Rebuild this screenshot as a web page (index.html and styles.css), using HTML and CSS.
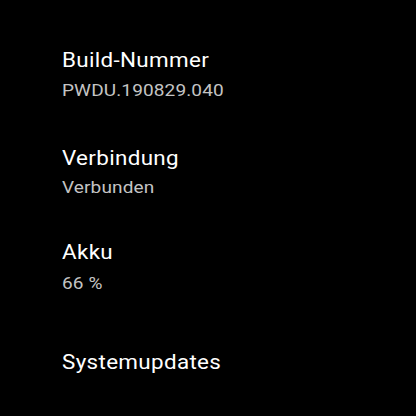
FILE: index.html
```html
<!DOCTYPE html>
<html lang="de">
<head>
<meta charset="utf-8">
<link rel="stylesheet" href="styles.css">
</head>
<body>
<main class="list">
  <div class="item item-1">
    <div class="title">Build-Nummer</div>
    <div class="sub">PWDU.190829.040</div>
  </div>
  <div class="item item-2">
    <div class="title">Verbindung</div>
    <div class="sub">Verbunden</div>
  </div>
  <div class="item item-3">
    <div class="title">Akku</div>
    <div class="sub">66 %</div>
  </div>
  <div class="item item-4">
    <div class="title">Systemupdates</div>
  </div>
</main>
</body>
</html>
```
FILE: styles.css
```css
html, body {
  margin: 0;
  padding: 0;
  background: #000;
  width: 416px;
  height: 416px;
  overflow: hidden;
}
.list {
  display: flex;
  flex-direction: column;
  padding-left: 62px;
  font-family: Roboto, "Noto Sans", sans-serif;
}
.item {
  display: flex;
  flex-direction: column;
  align-items: flex-start;
}
.title,
.sub {
  white-space: nowrap;
  transform: scaleX(1.12);
  transform-origin: left center;
}
.title {
  color: #fff;
  font-size: 20px;
  line-height: 24px;
  letter-spacing: 0.3px;
}
.sub {
  color: #c4c4c4;
  font-size: 17px;
  line-height: 20px;
  letter-spacing: 0.1px;
  margin-top: 8px;
}
.item-1 { margin-top: 48px; }
.item-2 { margin-top: 46px; }
.item-2 .sub { margin-top: 7px; }
.item-3 { margin-top: 43px; }
.item-3 .sub { margin-top: 9px; }
.item-4 { margin-top: 57px; }
```
